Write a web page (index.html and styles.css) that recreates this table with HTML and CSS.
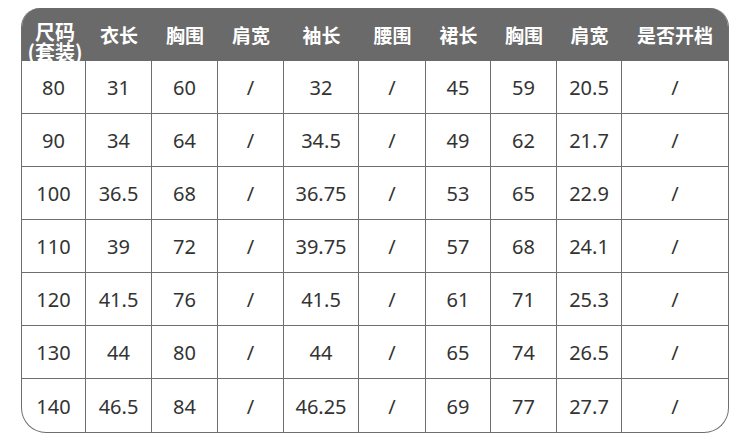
FILE: index.html
```html
<!DOCTYPE html>
<html lang="zh">
<head>
<meta charset="utf-8">
<link rel="stylesheet" href="styles.css">
</head>
<body>
<div class="chart">
  <div class="row head">
    <div class="cell first"><span class="two"><span class="line">尺码</span><span class="line">(套装)</span></span></div>
    <div class="cell">衣长</div>
    <div class="cell">胸围</div>
    <div class="cell">肩宽</div>
    <div class="cell">袖长</div>
    <div class="cell">腰围</div>
    <div class="cell">裙长</div>
    <div class="cell">胸围</div>
    <div class="cell">肩宽</div>
    <div class="cell">是否开档</div>
  </div>
  <div class="row"><div class="cell">80</div><div class="cell">31</div><div class="cell">60</div><div class="cell">/</div><div class="cell">32</div><div class="cell">/</div><div class="cell">45</div><div class="cell">59</div><div class="cell">20.5</div><div class="cell">/</div></div>
  <div class="row"><div class="cell">90</div><div class="cell">34</div><div class="cell">64</div><div class="cell">/</div><div class="cell">34.5</div><div class="cell">/</div><div class="cell">49</div><div class="cell">62</div><div class="cell">21.7</div><div class="cell">/</div></div>
  <div class="row"><div class="cell">100</div><div class="cell">36.5</div><div class="cell">68</div><div class="cell">/</div><div class="cell">36.75</div><div class="cell">/</div><div class="cell">53</div><div class="cell">65</div><div class="cell">22.9</div><div class="cell">/</div></div>
  <div class="row"><div class="cell">110</div><div class="cell">39</div><div class="cell">72</div><div class="cell">/</div><div class="cell">39.75</div><div class="cell">/</div><div class="cell">57</div><div class="cell">68</div><div class="cell">24.1</div><div class="cell">/</div></div>
  <div class="row"><div class="cell">120</div><div class="cell">41.5</div><div class="cell">76</div><div class="cell">/</div><div class="cell">41.5</div><div class="cell">/</div><div class="cell">61</div><div class="cell">71</div><div class="cell">25.3</div><div class="cell">/</div></div>
  <div class="row"><div class="cell">130</div><div class="cell">44</div><div class="cell">80</div><div class="cell">/</div><div class="cell">44</div><div class="cell">/</div><div class="cell">65</div><div class="cell">74</div><div class="cell">26.5</div><div class="cell">/</div></div>
  <div class="row last"><div class="cell">140</div><div class="cell">46.5</div><div class="cell">84</div><div class="cell">/</div><div class="cell">46.25</div><div class="cell">/</div><div class="cell">69</div><div class="cell">77</div><div class="cell">27.7</div><div class="cell">/</div></div>
</div>
</body>
</html>
```
FILE: styles.css
```css
html, body {
  margin: 0;
  background: #ffffff;
}
body {
  padding: 8px 21px 0 21px;
}
.chart {
  box-sizing: border-box;
  width: 708px;
  border: 1px solid #6e6e6e;
  border-top: none;
  border-radius: 19px 19px 25px 25px;
  overflow: hidden;
  font-family: "Noto Sans", "Noto Sans CJK SC", sans-serif;
}
.row {
  box-sizing: border-box;
  display: grid;
  grid-template-columns: 64px 66px 66px 66px 75px 67px 65px 66px 65px 106px;
  height: 53px;
  border-bottom: 1px solid #6e6e6e;
}
.row.last {
  border-bottom: none;
}
.cell {
  box-sizing: border-box;
  display: flex;
  align-items: center;
  justify-content: center;
  border-right: 1px solid #6e6e6e;
  font-size: 20px;
  color: #333333;
  padding-top: 1px;
}
.cell:last-child {
  border-right: none;
}
.head {
  background: #6a6a6a;
  border-bottom: none;
}
.head .cell {
  border-right: none;
  color: #ffffff;
  font-family: "Noto Sans CJK SC", sans-serif;
  font-weight: 700;
  font-size: 19px;
  padding-top: 0;
  padding-bottom: 2px;
}
.head .first {
  align-items: flex-start;
  padding-top: 14px;
  padding-bottom: 0;
  padding-left: 2px;
}
.two {
  display: flex;
  flex-direction: column;
  align-items: center;
  font-size: 20px;
  line-height: 20px;
}
```
